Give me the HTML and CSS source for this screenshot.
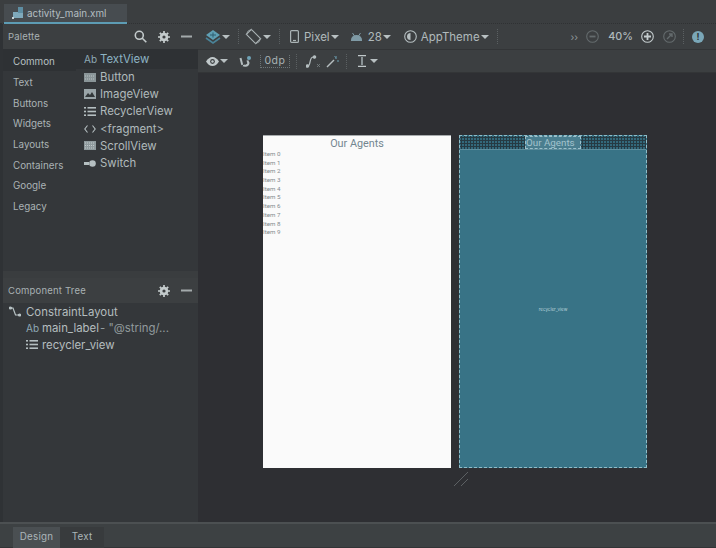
FILE: index.html
```html
<!DOCTYPE html>
<html lang="en">
<head>
<meta charset="utf-8">
<title>activity_main.xml</title>
<link rel="stylesheet" href="styles.css">
</head>
<body>
<div class="app">
  <header class="tabstrip">
    <div class="filetab">
      <svg class="ico" width="13" height="14" viewBox="0 0 13 14"><rect x="1" y="6" width="10" height="6" fill="#7fa9bb"/><rect x="6" y="1" width="5" height="6" fill="#5e8ea3"/><rect x="0" y="11" width="2" height="2" fill="#c9d4d8"/></svg>
      <span>activity_main.xml</span>
    </div>
  </header>
  <div class="main">
    <aside class="side">
      <div class="panelhead">
        <span class="paneltitle">Palette</span>
        <span class="headicons">
          <svg width="13" height="13" viewBox="0 0 13 13" fill="none" stroke="#c4cbcc" stroke-width="1.6"><circle cx="5.3" cy="5.3" r="4"/><path d="M8.3 8.3l4 4"/></svg>
          <svg width="12" height="12" viewBox="0 0 12 12"><circle cx="6" cy="6" r="3.2" fill="none" stroke="#c4cbcc" stroke-width="2.2"/><path d="M6 0v12M0 6h12M1.8 1.8l8.4 8.4M10.2 1.8l-8.4 8.4" stroke="#c4cbcc" stroke-width="1.7"/><circle cx="6" cy="6" r="1.6" fill="#3c3f41"/></svg>
          <svg width="11" height="3" viewBox="0 0 11 3"><rect width="11" height="2" y="0.5" fill="#a3aaab"/></svg>
        </span>
      </div>
      <div class="palette">
        <ul class="cats">
          <li class="cat on">Common</li>
          <li class="cat">Text</li>
          <li class="cat">Buttons</li>
          <li class="cat">Widgets</li>
          <li class="cat">Layouts</li>
          <li class="cat">Containers</li>
          <li class="cat">Google</li>
          <li class="cat">Legacy</li>
        </ul>
        <ul class="items">
          <li class="item on"><span class="ab">Ab</span><span class="hl">TextView</span></li>
          <li class="item"><svg width="12" height="9" viewBox="0 0 12 9"><rect width="12" height="9" fill="#8a9598"/><path d="M1 3h10M1 6h10" stroke="#b9c2c4" stroke-dasharray="1 1"/></svg><span>Button</span></li>
          <li class="item"><svg width="12" height="10" viewBox="0 0 12 10"><rect width="12" height="10" fill="#9aa5a8"/><path d="M1 8l3-4 2 2 2-3 3 5z" fill="#33383a"/></svg><span>ImageView</span></li>
          <li class="item"><svg width="12" height="9" viewBox="0 0 12 9" fill="#b5bfc1"><rect width="2" height="1.6"/><rect y="3.7" width="2" height="1.6"/><rect y="7.4" width="2" height="1.6"/><rect x="3.5" width="8.5" height="1.6"/><rect x="3.5" y="3.7" width="8.5" height="1.6"/><rect x="3.5" y="7.4" width="8.5" height="1.6"/></svg><span>RecyclerView</span></li>
          <li class="item"><svg width="12" height="8" viewBox="0 0 12 8" fill="none" stroke="#b5bfc1" stroke-width="1.1"><path d="M3.5 .5L.8 4l2.7 3.5M8.500 .5L11.200 4 8.500 7.500"/></svg><span>&lt;fragment&gt;</span></li>
          <li class="item"><svg width="12" height="9" viewBox="0 0 12 9"><rect width="12" height="9" fill="#8f9a9d"/><path d="M1 2h10M1 4.500h10M1 7h10" stroke="#c2cacc" stroke-dasharray="1 1"/></svg><span>ScrollView</span></li>
          <li class="item"><svg width="12" height="7" viewBox="0 0 12 7" fill="#b5bfc1"><rect y="2" width="5" height="3"/><circle cx="8.500" cy="3.500" r="3.300"/></svg><span>Switch</span></li>
        </ul>
      </div>
      <div class="divider"></div>
      <div class="panelhead treehead">
        <span class="paneltitle">Component Tree</span>
        <span class="headicons">
          <svg width="12" height="12" viewBox="0 0 12 12"><circle cx="6" cy="6" r="3.2" fill="none" stroke="#c4cbcc" stroke-width="2.2"/><path d="M6 0v12M0 6h12M1.8 1.8l8.4 8.4M10.2 1.8l-8.4 8.4" stroke="#c4cbcc" stroke-width="1.7"/><circle cx="6" cy="6" r="1.6" fill="#3c3f41"/></svg>
          <svg width="11" height="3" viewBox="0 0 11 3"><rect width="11" height="2" y="0.5" fill="#a3aaab"/></svg>
        </span>
      </div>
      <div class="tree">
        <div class="node root"><svg width="12" height="12" viewBox="0 0 12 12" fill="none" stroke="#b9c4c6" stroke-width="1.2"><path d="M2 2h2l2.500 7H10"/><circle cx="1.500" cy="2" r="1" fill="#b9c4c6"/><circle cx="10.500" cy="9" r="1" fill="#b9c4c6"/></svg><span>ConstraintLayout</span></div>
        <div class="node"><span class="ab small">Ab</span><span>main_label</span><span class="dim">- "@string/...</span></div>
        <div class="node"><svg class="listico" width="12" height="9" viewBox="0 0 12 9" fill="#b5bfc1"><rect width="2" height="1.6"/><rect y="3.7" width="2" height="1.6"/><rect y="7.4" width="2" height="1.6"/><rect x="3.5" width="8.5" height="1.6"/><rect x="3.5" y="3.7" width="8.5" height="1.6"/><rect x="3.500" y="7.400" width="8.500" height="1.600"/></svg><span>recycler_view</span></div>
      </div>
    </aside>
    <section class="editor">
      <div class="toolbar one">
        <svg width="16" height="14" viewBox="0 0 16 14"><path d="M8 0l7 5-7 5-7-5z" fill="#5fa0b5"/><path d="M1 8l7 5 7-5" fill="none" stroke="#4a8398" stroke-width="1.600"/><path d="M5 5h6M8 2.500v5" stroke="#2e5f70"/></svg>
        <i class="caret"></i>
        <i class="sep sep1"></i>
        <svg class="rotate" width="17" height="17" viewBox="0 0 17 17" fill="none" stroke="#aab3b5" stroke-width="1.100"><rect x="5" y="2" width="7" height="13" rx="1" transform="rotate(-45 8.500 8.500)"/><path d="M1 7A8 8 0 0 1 7 1M16 10a8 8 0 0 1-6 6" stroke-width=".8"/></svg>
        <i class="caret"></i>
        <i class="sep sep2"></i>
        <svg width="9" height="13" viewBox="0 0 9 13" fill="none" stroke="#aab3b5" stroke-width="1.200"><rect x=".6" y=".6" width="7.800" height="11.800" rx="1"/><path d="M3 10.500h3"/></svg>
        <span class="tbtext pixel">Pixel</span>
        <i class="caret"></i>
        <svg class="droid" width="11" height="8" viewBox="0 0 11 8" fill="#7f9aa5"><path d="M0 7a5.500 5 0 0 1 11 0v1H0z"/><path d="M1.500 0l2 3M9.500 0l-2 3" stroke="#7f9aa5"/></svg>
        <span class="tbtext api">28</span>
        <i class="caret"></i>
        <svg class="theme" width="13" height="13" viewBox="0 0 13 13"><circle cx="6.500" cy="6.500" r="5.800" fill="none" stroke="#b5bec0" stroke-width="1.100"/><path d="M6.500 3a3.500 3.500 0 0 0 0 7z" fill="#b5bec0"/></svg>
        <span class="tbtext apptheme">AppTheme</span>
        <i class="caret"></i>
        <i class="sep sep3"></i>
        <span class="spacer"></span>
        <span class="more">››</span>
        <svg class="zoomico" width="13" height="13" viewBox="0 0 13 13" fill="none" stroke="#646b6d" stroke-width="1.100"><circle cx="6.500" cy="6.500" r="5.800"/><path d="M3.500 6.500h6" stroke-width="1.800"/></svg>
        <span class="tbtext pct">40%</span>
        <svg class="zoomico" width="13" height="13" viewBox="0 0 13 13" fill="none" stroke="#c4ccce" stroke-width="1.100"><circle cx="6.500" cy="6.500" r="5.800"/><path d="M3 6.500h7M6.500 3v7" stroke-width="1.800"/></svg>
        <svg class="zoomico third" width="13" height="13" viewBox="0 0 13 13" fill="none" stroke="#646b6d" stroke-width="1.100"><circle cx="6.500" cy="6.500" r="5.800"/><path d="M4 9l5-5M6 4h3v3" stroke-width="1.400"/></svg>
        <i class="sep sep4"></i>
        <span class="alert">!</span>
      </div>
      <div class="toolbar two">
        <svg width="13" height="9" viewBox="0 0 13 9"><path d="M0 4.500C2 1.500 4 0 6.500 0S11 1.500 13 4.500C11 7.500 9 9 6.500 9S2 7.500 0 4.500z" fill="#c0c8ca"/><circle cx="6.500" cy="4.500" r="2.400" fill="#3c3f41"/><circle cx="6.500" cy="4.500" r="1.200" fill="#c0c8ca"/></svg>
        <i class="caret"></i>
        <svg class="magnet" width="13" height="13" viewBox="0 0 13 13" fill="none" stroke="#b5bec0" stroke-width="2"><path d="M1.500 3l1.500 6a3.500 3.500 0 0 0 6.500-1L8 5"/><path d="M3 11l8-9" stroke="#3c3f41" stroke-width="1"/><circle cx="10" cy="3" r="2" fill="#6fa3b6" stroke="none"/></svg>
        <span class="dp">0dp</span>
        <i class="sep sep5"></i>
        <svg class="curve" width="15" height="13" viewBox="0 0 15 13" fill="none" stroke="#b5bec0" stroke-width="1.200"><path d="M1.500 11c4 0 1-9 6-9"/><circle cx="1.500" cy="11" r="1.200" fill="#b5bec0"/><circle cx="8.500" cy="2" r="1.200" fill="#b5bec0"/><path d="M11 9l3 3M14 9l-3 3" stroke="#7b8385" stroke-width=".8"/></svg>
        <svg class="wand" width="13" height="13" viewBox="0 0 13 13" fill="none" stroke="#b5bec0" stroke-width="1.500"><path d="M1 12l7-7"/><path d="M10 1v3M11 6h2M8.500 1.500l1 1" stroke="#6fa3b6" stroke-width="1"/></svg>
        <i class="sep sep6"></i>
        <svg class="ibeam" width="8" height="12" viewBox="0 0 8 12"><path d="M0 .6h8M0 11.400h8" stroke="#c0c8ca" stroke-width="1.200"/><rect x="3" y="2" width="2" height="8" fill="#8a9396"/></svg>
        <i class="caret"></i>
      </div>
      <div class="canvas">
        <div class="screen light">
          <div class="lighttitle">Our Agents</div>
          <ul class="rows">
            <li>Item 0</li><li>Item 1</li><li>Item 2</li><li>Item 3</li><li>Item 4</li>
            <li>Item 5</li><li>Item 6</li><li>Item 7</li><li>Item 8</li><li>Item 9</li>
          </ul>
        </div>
        <div class="screen blue">
          <div class="bluehead">
            <span class="hatch"></span>
            <span class="bluetitle">Our Agents</span>
            <span class="hatch"></span>
          </div>
          <div class="bluebody">recycler_view</div>
          <svg class="resize" width="18" height="16" viewBox="0 0 18 16" fill="none" stroke="#5c6063" stroke-width="1"><path d="M1 15L15 1M8 15L15 8"/></svg>
        </div>
      </div>
    </section>
  </div>
  <footer class="bottom">
    <span class="btab on">Design</span>
    <span class="btab">Text</span>
  </footer>
</div>
</body>
</html>
```
FILE: styles.css
```css
* { box-sizing: border-box; }
html, body { margin: 0; padding: 0; }
body { width: 716px; height: 548px; overflow: hidden; background: #3c3f41; font-family: Inter, "Liberation Sans", sans-serif; color: #b9c2c4; }
ul { list-style: none; margin: 0; padding: 0; }
svg, i { flex: none; display: block; }
.app { display: flex; flex-direction: column; height: 548px; }

.tabstrip { height: 24px; padding: 4px 0 0 4px; background: #3b3e40; border-bottom: 1px dotted #2f3133; flex: none; }
.filetab { width: 123px; height: 20px; display: flex; align-items: center; gap: 2px; padding-left: 8px; background: #474c50; border-bottom: 2px solid #5d9cb4; font-size: 9.900px; color: #b4bec1; }

.main { flex: 1; display: flex; min-height: 0; }
.side { width: 198px; flex: none; display: flex; flex-direction: column; background: #34373a; border-left: 3px solid #2f3235; }
.panelhead { height: 25px; flex: none; display: flex; align-items: center; justify-content: space-between; padding: 0 6px 0 5px; background: #3c3f41; }
.paneltitle { font-size: 9.500px; color: #a8b1b3; letter-spacing: .2px; }
.headicons { display: flex; align-items: center; gap: 11px; }

.palette { height: 222px; flex: none; display: flex; }
.cats { width: 73px; flex: none; }
.cat { height: 20.700px; padding: 5px 0 0 10px; font-size: 9.800px; color: #aab3b5; line-height: 14px; }
.cat.on { background: #2e3134; height: 22px; color: #b6c0c2; padding-top: 6px; }
.items { flex: 1; }
.item { height: 17.200px; display: flex; align-items: center; gap: 4px; padding-left: 8px; font-size: 11.400px; color: #b0babc; }
.item.on { background: #2e3134; height: 19.500px; padding-top: 1px; }
.hl { color: #8db4c4; }
.ab { width: 12px; font-size: 10px; color: #8fa9b5; }

.divider { height: 7px; flex: none; background: #3a3d3f; }
.tree { flex: 1; padding-top: 1px; }
.node { height: 16.300px; display: flex; align-items: center; gap: 4px; padding-left: 23px; font-size: 11.400px; color: #b4bdbf; white-space: nowrap; }
.node.root { padding-left: 6px; gap: 5px; }
.small { width: 12px; }
.dim { color: #929b9d; margin-left: -3px; }

.editor { flex: 1; min-width: 0; display: flex; flex-direction: column; }
.toolbar { flex: none; display: flex; align-items: center; background: #3c3f41; }
.toolbar.one { height: 26px; padding: 0 12px 0 7px; border-bottom: 1px solid #333537; }
.toolbar.two { height: 23px; padding: 0 0 0 8px; border-bottom: 1px solid #333537; }
.caret { width: 0; height: 0; margin-left: 1px; border: 4px solid transparent; border-top: 4px solid #b8c0c2; border-bottom: 0; }
.sep { width: 0; height: 15px; border-left: 1px dotted #5b6062; }
.sep1 { margin: 0 6px 0 8px; }
.sep2 { margin: 0 10px 0 8px; }
.sep3 { margin-left: 8px; }
.sep4 { margin: 0 8px 0 7px; }
.sep5 { margin: 0 9px 0 5px; }
.sep6 { margin: 0 11px 0 7px; }
.spacer { flex: 1; }
.tbtext { font-size: 11.500px; color: #b0babc; }
.pixel { margin-left: 5px; }
.droid { margin-left: 12px; }
.api { margin-left: 6px; }
.theme { margin-left: 13px; }
.apptheme { margin-left: 4px; }
.more { font-size: 10px; color: #8f989a; margin-right: 8px; }
.pct { margin: 0 8px 0 9px; font-size: 10.800px; font-weight: 500; }
.third { margin-left: 9px; }
.alert { width: 12px; height: 12px; border-radius: 50%; background: #7aa7b8; color: #2d3436; font-size: 9px; font-weight: 700; text-align: center; line-height: 12px; }
.magnet { margin-left: 11px; }
.dp { width: 30px; height: 13px; margin: 0 1px 0 8px; font-size: 10.500px; line-height: 11px; text-align: center; color: #a8b2b4; border: 1px dotted #6d7577; border-top: 0; letter-spacing: .5px; }
.wand { margin-left: 5px; }
.ibeam { margin-right: 3px; }

.canvas { flex: 1; min-height: 0; display: flex; gap: 8px; padding: 62px 0 0 65px; background: #2e2f33; }
.screen { width: 188px; height: 333px; }
.light { background: #fafafa; border-top: 1px solid #a7abad; color: #6f7b80; }
.lighttitle { height: 14px; padding-top: 1px; text-align: center; font-family: Roboto, "Liberation Sans", sans-serif; font-size: 10.800px; line-height: 14px; color: #738690; }
.rows { font-family: Roboto, "Liberation Sans", sans-serif; font-size: 6.200px; line-height: 8.680px; color: #838a8e; }
.blue { position: relative; display: flex; flex-direction: column; background: #387386; border: 1px dashed #8fbcc8; }
.bluehead { height: 14px; flex: none; display: flex; border-bottom: 1px solid #5d8d9c; }
.hatch { flex: 1; background-color: #33697b; background-image: radial-gradient(#263a42 50%, transparent 60%); background-size: 3px 3px; }
.bluetitle { width: 56px; flex: none; padding-right: 6px; border: 1px dashed #9cc0cb; font-family: Roboto, "Liberation Sans", sans-serif; font-size: 9.800px; line-height: 12px; text-align: center; white-space: nowrap; color: #a3c3cd; background: #4a7e8f; }
.bluebody { flex: 1; display: flex; align-items: center; justify-content: center; padding-top: 1px; font-size: 4.500px; color: #b5d0d8; }
.resize { position: absolute; left: -7px; bottom: -20px; }

.bottom { height: 26px; flex: none; display: flex; padding: 3px 0 0 13px; background: #3d4143; border-top: 2px solid #4c5052; border-bottom: 1px solid #323436; }
.btab { height: 22px; padding-top: 4px; text-align: center; font-size: 9.800px; color: #aab5b9; letter-spacing: .2px; }
.btab.on { width: 47px; background: #4a4f52; }
.btab:not(.on) { width: 44px; background: #383b3d; }
```
